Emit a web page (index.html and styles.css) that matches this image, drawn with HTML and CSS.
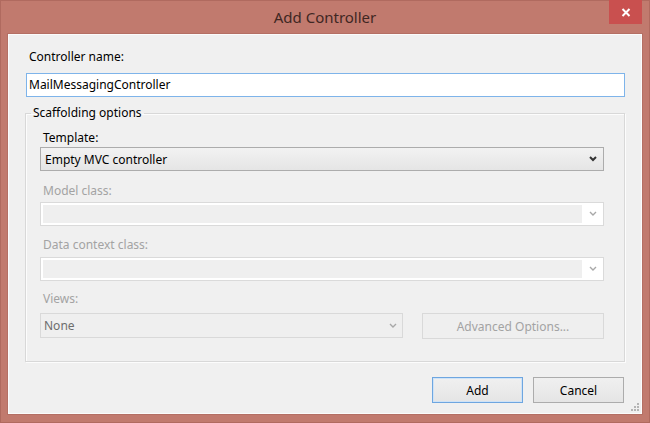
FILE: index.html
```html
<!DOCTYPE html>
<html lang="en">
<head>
<meta charset="utf-8">
<title>Add Controller</title>
<link rel="stylesheet" href="styles.css">
</head>
<body>
<div class="window">
  <div class="titlebar">
    <h1 class="title">Add Controller</h1>
    <div class="close" aria-label="Close">
      <svg width="10" height="9" viewBox="0 0 10 9"><path d="M1.5 1 L8.5 8 M8.5 1 L1.5 8" stroke="#fff" stroke-width="2" fill="none"/></svg>
    </div>
  </div>
  <div class="client">
    <label class="lbl lbl-name">Controller name:</label>
    <div class="textbox">MailMessagingController</div>
    <fieldset class="group">
      <legend>Scaffolding options</legend>
      <div class="group-body">
        <label class="lbl lbl-template">Template:</label>
        <div class="select">
          <span>Empty MVC controller</span>
          <svg class="chev" width="8" height="6" viewBox="0 0 8 6"><path d="M1 1 L4 4 L7 1" stroke="#333" stroke-width="2" fill="none"/></svg>
        </div>
        <label class="lbl dis lbl-model">Model class:</label>
        <div class="dcombo">
          <div class="field"></div>
          <div class="arrow"><svg width="8" height="6" viewBox="0 0 8 6"><path d="M1 1 L4 4 L7 1" stroke="#a8a8a8" stroke-width="1.4" fill="none"/></svg></div>
        </div>
        <label class="lbl dis lbl-data">Data context class:</label>
        <div class="dcombo">
          <div class="field"></div>
          <div class="arrow"><svg width="8" height="6" viewBox="0 0 8 6"><path d="M1 1 L4 4 L7 1" stroke="#a8a8a8" stroke-width="1.4" fill="none"/></svg></div>
        </div>
        <label class="lbl dis lbl-views">Views:</label>
        <div class="views-row">
          <div class="vcombo">
            <span>None</span>
            <svg width="8" height="6" viewBox="0 0 8 6"><path d="M1 1 L4 4 L7 1" stroke="#a8a8a8" stroke-width="1.4" fill="none"/></svg>
          </div>
          <div class="btn btn-adv">Advanced Options...</div>
        </div>
      </div>
    </fieldset>
    <div class="buttons">
      <div class="btn btn-default">Add</div>
      <div class="btn">Cancel</div>
    </div>
    <svg class="grip" width="9" height="9" viewBox="0 0 9 9">
      <g fill="#b4b4b4">
        <rect x="6" y="0" width="2" height="2"/>
        <rect x="3" y="3" width="2" height="2"/><rect x="6" y="3" width="2" height="2"/>
        <rect x="0" y="6" width="2" height="2"/><rect x="3" y="6" width="2" height="2"/><rect x="6" y="6" width="2" height="2"/>
      </g>
    </svg>
  </div>
</div>
</body>
</html>
```
FILE: styles.css
```css
* { box-sizing: border-box; }
html, body { margin: 0; padding: 0; }
body {
  font-family: "Noto Sans", "Open Sans", sans-serif;
  font-size: 12px;
  background: #c17a6e;
  color: #000;
}
.window {
  width: 650px;
  height: 423px;
  border: 1px solid #b06a5f;
  padding: 0 7px 8px 7px;
  display: flex;
  flex-direction: column;
  background: #c17a6e;
}
.titlebar {
  height: 33px;
  display: grid;
  grid-template-columns: 1fr auto 1fr;
  align-items: start;
}
.title {
  grid-column: 2;
  margin: 0;
  padding-top: 6px;
  font-weight: normal;
  font-size: 15px;
  line-height: 20px;
  color: #3f2723;
}
.close {
  grid-column: 3;
  justify-self: end;
  width: 33px;
  height: 24px;
  margin-top: -1px;
  background: #c9504f;
  display: flex;
  align-items: center;
  justify-content: center;
}
.client {
  flex: 1;
  position: relative;
  background: #f0f0f0;
  border: 1px solid #fbfbfb;
  box-shadow: 0 0 0 1px #b46f64;
  padding: 14px 16px 0 17px;
  display: flex;
  flex-direction: column;
}
.lbl {
  display: block;
  line-height: 16px;
  padding-left: 3px;
}
.dis { color: #a3a3a3; }
.lbl-name { margin-bottom: 8px; }
.textbox {
  height: 24px;
  border: 1px solid #7eb4ea;
  background: #fff;
  padding-left: 2px;
  line-height: 22px;
}
.group {
  margin: 8px 0 0 -1px;
  padding: 9px 20px 22px 14px;
  border: 1px solid #d8d8d8;
  box-shadow: inset 1px 1px 0 #fcfcfc, 1px 1px 0 #fcfcfc;
  min-width: 0;
}
.group legend {
  margin-left: -9px;
  padding: 0 2px;
  line-height: 16px;
}
.group-body {
  display: flex;
  flex-direction: column;
}
.lbl-template { margin-bottom: 1px; }
.lbl-model { margin-top: 12px; margin-bottom: 3px; }
.lbl-data { margin-top: 11px; margin-bottom: 4px; }
.lbl-views { margin-top: 10px; margin-bottom: 6px; }
.select {
  height: 24px;
  border: 1px solid #acacac;
  background: linear-gradient(#f2f2f2, #e5e5e5);
  display: flex;
  align-items: center;
  justify-content: space-between;
  padding: 0 6px 0 4px;
}
.dcombo {
  height: 24px;
  border: 1px solid #dadada;
  background: #fff;
  padding: 2px 0 2px 2px;
  display: flex;
}
.dcombo .field {
  flex: 1;
  background: #efefef;
}
.dcombo .arrow {
  width: 21px;
  display: flex;
  align-items: center;
  justify-content: center;
}
.views-row {
  display: flex;
  justify-content: space-between;
  height: 26px;
}
.vcombo {
  width: 363px;
  height: 25px;
  border: 1px solid #d9d9d9;
  background: #efefef;
  color: #6d6d6d;
  display: flex;
  align-items: center;
  justify-content: space-between;
  padding: 0 5px 0 3px;
}
.btn {
  width: 91px;
  height: 26px;
  border: 1px solid #acacac;
  background: linear-gradient(#f0f0f0, #e5e5e5);
  display: flex;
  align-items: center;
  justify-content: center;
}
.btn-adv {
  width: 182px;
  border-color: #d9d9d9;
  background: #efefef;
  color: #a3a3a3;
}
.btn-default {
  border-color: #6ea6e0;
  box-shadow: inset 0 0 0 1px #cfe3f7;
}
.buttons {
  display: flex;
  justify-content: flex-end;
  gap: 10px;
  margin-top: 15px;
  padding-right: 1px;
}
.grip {
  position: absolute;
  right: 1px;
  bottom: 1px;
}
```
